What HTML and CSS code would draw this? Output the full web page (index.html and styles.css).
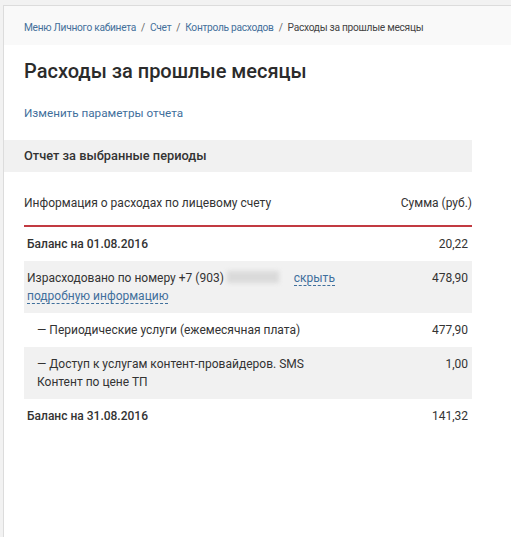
FILE: index.html
```html
<!DOCTYPE html>
<html lang="ru">
<head>
<meta charset="utf-8">
<title>Расходы за прошлые месяцы</title>
<link rel="stylesheet" href="styles.css">
</head>
<body>
<div class="page">
  <nav class="crumbs">
    <a href="#">Меню Личного кабинета</a><span class="sep">/</span><a href="#">Счет</a><span class="sep">/</span><a href="#">Контроль расходов</a><span class="sep">/</span><span class="current">Расходы за прошлые месяцы</span>
  </nav>
  <main class="content">
    <h1 class="title">Расходы за прошлые месяцы</h1>
    <a class="params" href="#">Изменить параметры отчета</a>
    <div class="section-head">Отчет за выбранные периоды</div>
    <div class="report">
      <div class="thead">
        <span>Информация о расходах по лицевому счету</span>
        <span>Сумма (руб.)</span>
      </div>
      <div class="row bold">
        <span class="name">Баланс на 01.08.2016</span>
        <span class="sum">20,22</span>
      </div>
      <div class="row shade">
        <span class="name">Израсходовано по номеру +7 (903) <span class="blur"></span> <a class="dash first" href="#">скрыть</a> <a class="dash" href="#">подробную информацию</a></span>
        <span class="sum">478,90</span>
      </div>
      <div class="row sub">
        <span class="name">— Периодические услуги (ежемесячная плата)</span>
        <span class="sum">477,90</span>
      </div>
      <div class="row shade sub">
        <span class="name">— Доступ к услугам контент-провайдеров. SMS Контент по цене ТП</span>
        <span class="sum">1,00</span>
      </div>
      <div class="row bold">
        <span class="name">Баланс на 31.08.2016</span>
        <span class="sum">141,32</span>
      </div>
    </div>
  </main>
</div>
</body>
</html>
```
FILE: styles.css
```css
html, body {
  margin: 0;
  padding: 0;
}
body {
  background: #f2f2f2;
  font-family: Roboto, "Liberation Sans", sans-serif;
  color: #333;
  height: 537px;
  overflow: hidden;
}
.page {
  margin: 5px 0 0 3px;
  border-top: 1px solid #dcdcdc;
  border-left: 1px solid #dcdcdc;
  background: #fff;
  min-height: 540px;
}
.crumbs {
  background: #f9f9f9;
  height: 39px;
  box-sizing: border-box;
  padding: 15px 0 0 20px;
  font-size: 10.2px;
  letter-spacing: -0.28px;
  line-height: 14px;
  color: #444;
  white-space: nowrap;
}
.crumbs a {
  color: #44709b;
  text-decoration: none;
}
.crumbs .sep {
  margin: 0 5px;
  color: #666;
}
.content {
  width: 468px;
}
.title {
  margin: 0;
  padding: 11px 0 0 20px;
  font-size: 20px;
  line-height: 30px;
  font-weight: 500;
  color: #2b2b2b;
}
.params {
  display: block;
  margin: 18px 0 0 20px;
  font-size: 11.7px;
  line-height: 18px;
  color: #3f6f9c;
  text-decoration: none;
}
.section-head {
  margin-top: 18px;
  background: #f1f1f1;
  height: 32px;
  box-sizing: border-box;
  padding: 8px 0 0 20px;
  font-size: 12.8px;
  line-height: 16px;
  font-weight: 500;
  color: #333;
}
.report {
  margin-left: 20px;
  font-size: 12px;
  line-height: 18px;
}
.thead {
  display: flex;
  justify-content: space-between;
  padding: 22px 0 13px;
  border-bottom: 2px solid #c23a41;
  color: #333;
}
.row {
  display: flex;
  justify-content: space-between;
  align-items: flex-start;
  gap: 20px;
  padding: 8px 4px 8px 3px;
}
.row .name {
  max-width: 312px;
}
.row.bold .name {
  font-weight: 500;
}
.row.shade {
  background: #f1f1f1;
}
.row.sub .name {
  padding-left: 10px;
  max-width: 292px;
}
.blur {
  display: inline-block;
  width: 52px;
  height: 12px;
  margin: 0 8px 0 0;
  vertical-align: -1px;
  background: #dadada;
  filter: blur(2px);
}
.dash {
  color: #3f6f9c;
  text-decoration: none;
  border-bottom: 1px dashed #3f6f9c;
}
.dash.first {
  margin-left: 4px;
}
```
